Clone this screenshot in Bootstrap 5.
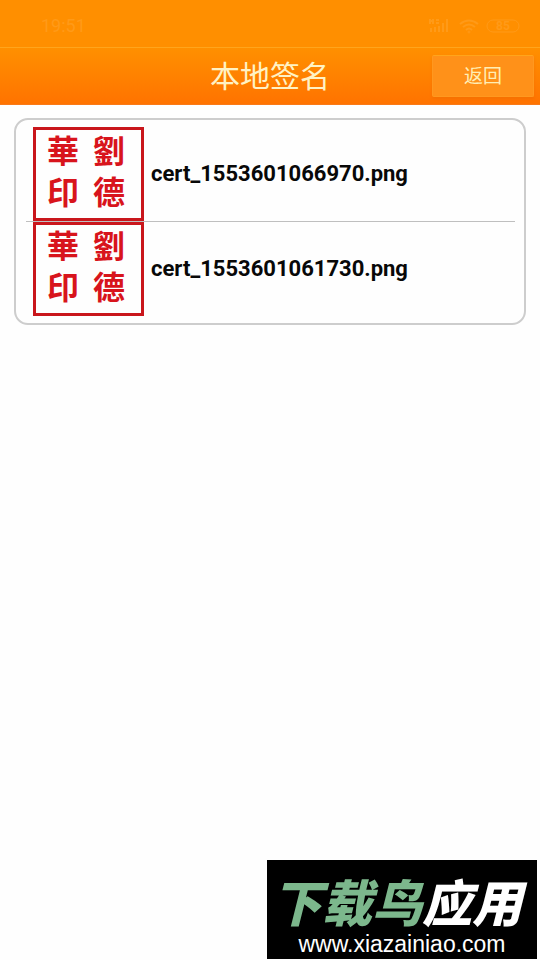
<!DOCTYPE html>
<html lang="zh-CN">
<head>
<meta charset="utf-8">
<meta name="viewport" content="width=device-width, initial-scale=1">
<title>本地签名</title>
<link rel="stylesheet" href="https://cdn.jsdelivr.net/npm/bootstrap@5.3.0/dist/css/bootstrap.min.css">
<style>
body { font-family: Roboto, "Noto Sans CJK SC", sans-serif; background: #fefefe; }
.status-bar { height: 47px; padding: 4px 20px 0 41px; background: #ff8f00; color: #ff9a18; font-size: 18px; }
.title-bar { display: grid; grid-template-columns: 1fr auto 1fr; height: 58px; padding: 0 6px; background: linear-gradient(#ff9000, #ff7300); border-top: 1px solid #ffa51c; border-bottom: 1px solid #f97a18; }
.title-bar h1 { grid-column: 2; font-size: 30px; line-height: 40px; padding-top: 2px; color: #fff2c4; font-weight: 400; }
.back-btn { width: 102px; height: 42px; padding: 1px 0 0; border: 1px solid #ff981f; border-top-color: #ffa51c; border-radius: 2px; background: #ff9119; color: #ffeeb5; font-size: 19px; line-height: 39px; box-shadow: 0 2px 3px #e8680066; }
.back-btn:hover { background: #ff9d33; color: #fff; }
.sign-card { margin: 13px 14px 0; padding: 7px 9px 7px 10px; border: 2px solid #cdcdcd; border-radius: 14px; background: #fefefe; }
.sign-row { padding: 0 7px; gap: 7px; color: #080808; font-size: 22px; line-height: 28px; }
.sign-row + .sign-row { border-top: 1px solid #bfbfbf; }
.seal { width: 111px; height: 94px; flex: none; }
.seal text { font-family: "Noto Sans CJK TC", sans-serif; font-size: 32px; font-weight: 700; text-anchor: middle; fill: #d8141c; }
.site-mark { width: 270px; height: 99px; margin: 0 3px 1px 0; padding-top: 12px; background: #000; color: #fff; }
.site-name { padding-right: 10px; font-family: "Noto Sans CJK SC", sans-serif; font-size: 50px; line-height: 56px; font-weight: 900; font-style: italic; }
.site-name span { color: #7cb78c; }
.site-url { padding-top: 2px; font-family: "Liberation Sans", Arial, sans-serif; font-size: 23px; line-height: 28px; color: #fff; }
</style>
</head>
<body>
<div class="d-flex flex-column min-vh-100">
  <div class="status-bar d-flex align-items-center justify-content-between">
    <span>19:51</span>
    <svg width="92" height="18" viewBox="0 0 92 18" fill="none" stroke="#ff9a18" aria-hidden="true">
      <path d="M2 2v5M5 2v5M2 4h3M8 3h3M8 6h3M3 15v-4M7 15v-5M11 15V9M15 15V6M19 15V2" stroke-width="2"/>
      <path d="M32 7q9-7 18 0M35 10q6-5 12 0M38 13q3-3 6 0" stroke-width="2"/>
      <circle cx="41" cy="15" r="1"/>
      <rect x="59" y="3" width="32" height="12" rx="6"/>
      <text x="75" y="13" text-anchor="middle" font-size="12" font-weight="700" fill="#ff9a18" stroke="none">85</text>
    </svg>
  </div>
  <header class="title-bar align-items-center">
    <h1 class="mb-0">本地签名</h1>
    <button type="button" class="btn back-btn ms-auto">返回</button>
  </header>
  <main class="sign-card">
    <ul class="list-unstyled mb-0">
      <li class="sign-row d-flex align-items-center fw-bold">
        <svg class="seal" viewBox="0 0 111 94" role="img" aria-label="印章">
          <rect x="1.5" y="1.5" width="108" height="91" fill="#fefefe" stroke="#c9161c" stroke-width="3"/>
          <text x="30" y="36">華</text><text x="76" y="36">劉</text>
          <text x="30" y="77">印</text><text x="76" y="77">德</text>
        </svg>
        <span>cert_1553601066970.png</span>
      </li>
      <li class="sign-row d-flex align-items-center fw-bold">
        <svg class="seal" viewBox="0 0 111 94" role="img" aria-label="印章">
          <rect x="1.5" y="1.5" width="108" height="91" fill="#fefefe" stroke="#c9161c" stroke-width="3"/>
          <text x="30" y="36">華</text><text x="76" y="36">劉</text>
          <text x="30" y="77">印</text><text x="76" y="77">德</text>
        </svg>
        <span>cert_1553601061730.png</span>
      </li>
    </ul>
  </main>
  <footer class="site-mark mt-auto align-self-end text-center">
    <div class="site-name"><span>下载鸟</span>应用</div>
    <a class="site-url d-block text-decoration-none" href="http://www.xiazainiao.com">www.xiazainiao.com</a>
  </footer>
</div>
<script src="https://cdn.jsdelivr.net/npm/bootstrap@5.3.0/dist/js/bootstrap.bundle.min.js"></script>
</body>
</html>
